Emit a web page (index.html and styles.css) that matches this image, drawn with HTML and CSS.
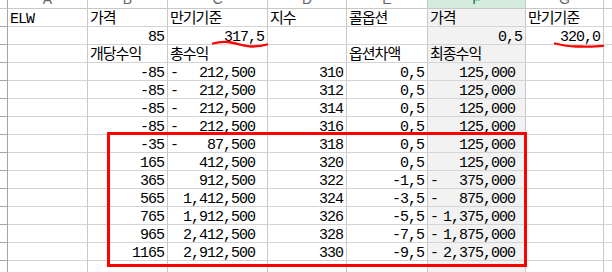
FILE: index.html
```html
<!DOCTYPE html>
<html lang="ko">
<head>
<meta charset="utf-8">
<title>ELW</title>
<link rel="stylesheet" href="styles.css">
</head>
<body>
<div class="sheet">
  <div class="grid">
    <!-- column headers -->
    <div class="ch corner"></div>
    <div class="ch"><span>A</span></div>
    <div class="ch"><span>B</span></div>
    <div class="ch"><span>C</span></div>
    <div class="ch"><span>D</span></div>
    <div class="ch"><span>E</span></div>
    <div class="ch sel"><span>F</span></div>
    <div class="ch"><span>G</span></div>
    <div class="ch"><span>H</span></div>

    <!-- row 1 -->
    <div class="rh"></div>
    <div class="c l">ELW</div>
    <div class="c l">가격</div>
    <div class="c l">만기기준</div>
    <div class="c l">지수</div>
    <div class="c l">콜옵션</div>
    <div class="c l f">가격</div>
    <div class="c l">만기기준</div>
    <div class="c"></div>

    <!-- row 2 -->
    <div class="rh"></div>
    <div class="c"></div>
    <div class="c r">85</div>
    <div class="c r">317,5</div>
    <div class="c"></div>
    <div class="c"></div>
    <div class="c r f">0,5</div>
    <div class="c r">320,0</div>
    <div class="c"></div>

    <!-- row 3 -->
    <div class="rh"></div>
    <div class="c"></div>
    <div class="c l">개당수익</div>
    <div class="c l">총수익</div>
    <div class="c"></div>
    <div class="c l">옵션차액</div>
    <div class="c l f">최종수익</div>
    <div class="c"></div>
    <div class="c"></div>

    <!-- row 4 -->
    <div class="rh"></div>
    <div class="c"></div>
    <div class="c r">-85</div>
    <div class="c acc accc"><span>-</span><span class="n">212,500</span></div>
    <div class="c r">310</div>
    <div class="c r">0,5</div>
    <div class="c acc accf f"><span class="n">125,000</span></div>
    <div class="c"></div>
    <div class="c"></div>

    <!-- row 5 -->
    <div class="rh"></div>
    <div class="c"></div>
    <div class="c r">-85</div>
    <div class="c acc accc"><span>-</span><span class="n">212,500</span></div>
    <div class="c r">312</div>
    <div class="c r">0,5</div>
    <div class="c acc accf f"><span class="n">125,000</span></div>
    <div class="c"></div>
    <div class="c"></div>

    <!-- row 6 -->
    <div class="rh"></div>
    <div class="c"></div>
    <div class="c r">-85</div>
    <div class="c acc accc"><span>-</span><span class="n">212,500</span></div>
    <div class="c r">314</div>
    <div class="c r">0,5</div>
    <div class="c acc accf f"><span class="n">125,000</span></div>
    <div class="c"></div>
    <div class="c"></div>

    <!-- row 7 -->
    <div class="rh"></div>
    <div class="c"></div>
    <div class="c r">-85</div>
    <div class="c acc accc"><span>-</span><span class="n">212,500</span></div>
    <div class="c r">316</div>
    <div class="c r">0,5</div>
    <div class="c acc accf f"><span class="n">125,000</span></div>
    <div class="c"></div>
    <div class="c"></div>

    <!-- row 8 -->
    <div class="rh"></div>
    <div class="c"></div>
    <div class="c r">-35</div>
    <div class="c acc accc"><span>-</span><span class="n">87,500</span></div>
    <div class="c r">318</div>
    <div class="c r">0,5</div>
    <div class="c acc accf f"><span class="n">125,000</span></div>
    <div class="c"></div>
    <div class="c"></div>

    <!-- row 9 -->
    <div class="rh"></div>
    <div class="c"></div>
    <div class="c r">165</div>
    <div class="c acc accc"><span class="n">412,500</span></div>
    <div class="c r">320</div>
    <div class="c r">0,5</div>
    <div class="c acc accf f"><span class="n">125,000</span></div>
    <div class="c"></div>
    <div class="c"></div>

    <!-- row 10 -->
    <div class="rh"></div>
    <div class="c"></div>
    <div class="c r">365</div>
    <div class="c acc accc"><span class="n">912,500</span></div>
    <div class="c r">322</div>
    <div class="c r">-1,5</div>
    <div class="c acc accf f"><span>-</span><span class="n">375,000</span></div>
    <div class="c"></div>
    <div class="c"></div>

    <!-- row 11 -->
    <div class="rh"></div>
    <div class="c"></div>
    <div class="c r">565</div>
    <div class="c acc accc"><span class="n">1,412,500</span></div>
    <div class="c r">324</div>
    <div class="c r">-3,5</div>
    <div class="c acc accf f"><span>-</span><span class="n">875,000</span></div>
    <div class="c"></div>
    <div class="c"></div>

    <!-- row 12 -->
    <div class="rh"></div>
    <div class="c"></div>
    <div class="c r">765</div>
    <div class="c acc accc"><span class="n">1,912,500</span></div>
    <div class="c r">326</div>
    <div class="c r">-5,5</div>
    <div class="c acc accf f"><span>-</span><span class="n">1,375,000</span></div>
    <div class="c"></div>
    <div class="c"></div>

    <!-- row 13 -->
    <div class="rh"></div>
    <div class="c"></div>
    <div class="c r">965</div>
    <div class="c acc accc"><span class="n">2,412,500</span></div>
    <div class="c r">328</div>
    <div class="c r">-7,5</div>
    <div class="c acc accf f"><span>-</span><span class="n">1,875,000</span></div>
    <div class="c"></div>
    <div class="c"></div>

    <!-- row 14 -->
    <div class="rh"></div>
    <div class="c"></div>
    <div class="c r">1165</div>
    <div class="c acc accc"><span class="n">2,912,500</span></div>
    <div class="c r">330</div>
    <div class="c r">-9,5</div>
    <div class="c acc accf f"><span>-</span><span class="n">2,375,000</span></div>
    <div class="c"></div>
    <div class="c"></div>

    <!-- row 15 -->
    <div class="rh"></div>
    <div class="c"></div>
    <div class="c"></div>
    <div class="c"></div>
    <div class="c"></div>
    <div class="c"></div>
    <div class="c f"></div>
    <div class="c"></div>
    <div class="c"></div>
  </div>

  <div class="box"></div>
  <svg class="marks" width="612" height="272" viewBox="0 0 612 272">
    <path d="M213,43.5 C218,42 222,41.5 228,42 C236,43 244,46.5 252,46.5 C258,46.5 263,45.5 267,44.5" />
    <path d="M555,43.5 C561,45 567,46.5 576,46.5 C586,46.5 596,46.8 603,45.8" />
  </svg>
</div>
</body>
</html>
```

FILE: styles.css
```css
html, body {
  margin: 0;
  padding: 0;
  background: #ffffff;
  width: 612px;
  height: 272px;
  overflow: hidden;
}

.sheet {
  position: relative;
  width: 612px;
  height: 272px;
  overflow: hidden;
  font-family: "Liberation Mono", "Noto Sans CJK KR", monospace;
  font-size: 15px;
  letter-spacing: -1px;
  color: #000;
}

.grid {
  display: grid;
  grid-template-columns: 8px 80px 80px 100px 79px 81px 98px 78px 40px;
  grid-template-rows: 9px repeat(15, 18px);
}

.c, .ch, .rh {
  box-sizing: border-box;
  border-right: 1px solid #c8c8c8;
  border-bottom: 1px solid #d4d4d4;
  white-space: nowrap;
  line-height: 21px;
  overflow: visible;
}

.c {
  display: flex;
  align-items: flex-start;
}

.l {
  justify-content: flex-start;
  padding-left: 2px;
}

.r {
  justify-content: flex-end;
  padding-right: 3px;
}

.f {
  background: #f2f2f2;
}

.acc {
  justify-content: space-between;
  padding-left: 2px;
}

.acc .n {
  margin-left: auto;
}

.accc {
  padding-right: 12px;
}

.accf {
  padding-right: 10px;
}

.rh {
  border-right: 1px solid #a6a6a6;
  border-bottom: 1px solid #a6a6a6;
  background: #ffffff;
}

.ch {
  overflow: hidden;
  background: #ffffff;
  border-bottom: 1px solid #c8c8c8;
  border-right: 1px solid #c8c8c8;
  text-align: center;
  font-family: "Liberation Sans", sans-serif;
  font-size: 14px;
  letter-spacing: 0;
  color: #666666;
}

.ch span {
  display: block;
  line-height: 17px;
  margin-top: -9px;
}

.ch.corner {
  border-right: 1px solid #a6a6a6;
}

.ch.sel {
  background: #d3ecdd;
  color: #217346;
}

.box {
  position: absolute;
  left: 107px;
  top: 132px;
  width: 420px;
  height: 135px;
  box-sizing: border-box;
  border: 3px solid #ff0000;
  pointer-events: none;
}

.marks {
  position: absolute;
  left: 0;
  top: 0;
  pointer-events: none;
}

.marks path {
  fill: none;
  stroke: #ff0000;
  stroke-width: 2.3;
  stroke-linecap: round;
}
```
